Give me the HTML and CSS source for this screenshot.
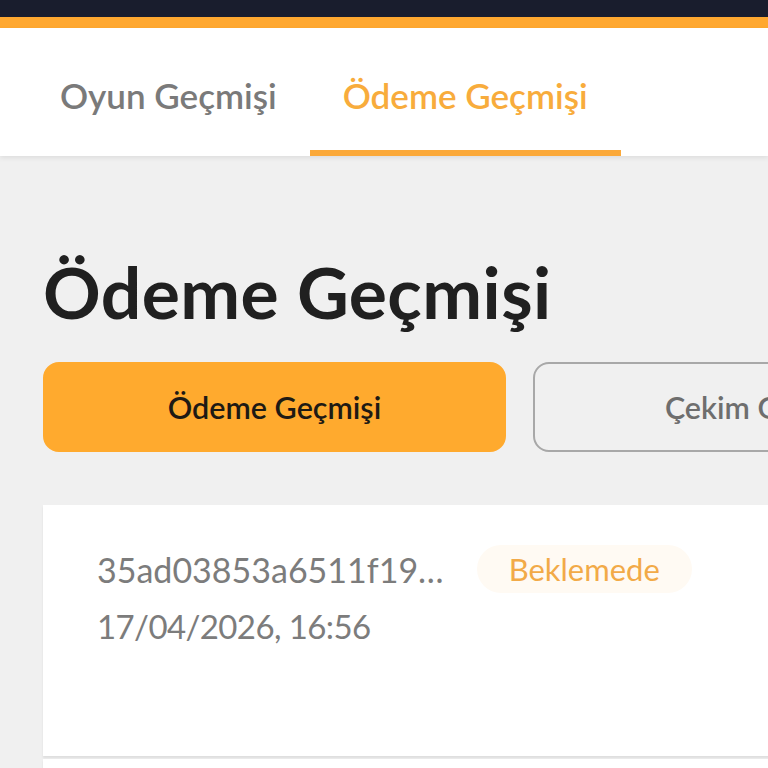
FILE: index.html
```html
<!DOCTYPE html>
<html lang="tr">
<head>
<meta charset="utf-8">
<title>Ödeme Geçmişi</title>
<link rel="stylesheet" href="styles.css">
</head>
<body>
<div class="topbar"></div>
<div class="stripe"></div>
<nav class="tabs">
  <div class="tab">Oyun Geçmişi</div>
  <div class="tab active">Ödeme Geçmişi</div>
</nav>
<main class="main">
  <h1 class="title">Ödeme Geçmişi</h1>
  <div class="switch">
    <button class="btn btn-active">Ödeme Geçmişi</button>
    <button class="btn">Çekim Geçmişi</button>
  </div>
  <div class="list">
    <div class="card">
      <div class="row">
        <span class="hash">35ad03853a6511f19…</span>
        <span class="badge">Beklemede</span>
      </div>
      <div class="date">17/04/2026, 16:56</div>
    </div>
    <div class="card"></div>
  </div>
</main>
</body>
</html>
```
FILE: styles.css
```css
html, body {
  margin: 0;
  padding: 0;
}
body {
  background: #f0f0f0;
  font-family: Lato, "Open Sans", sans-serif;
  overflow: hidden;
  width: 768px;
  height: 768px;
}
.topbar {
  height: 17px;
  background: #191d2d;
}
.stripe {
  height: 11px;
  background: #ffa830;
}
.tabs {
  height: 128px;
  background: #fff;
  display: flex;
  padding-left: 27px;
  box-shadow: 0 2px 5px rgba(0, 0, 0, 0.08);
  position: relative;
}
.tab {
  padding: 0 33px;
  display: flex;
  align-items: center;
  font-size: 35px;
  font-weight: 600;
  color: #7a7a7a;
  border-bottom: 6px solid transparent;
  padding-top: 12px;
}
.tab.active {
  color: #f8ac3c;
  border-bottom-color: #fba93a;
}
.main {
  width: 953px;
  padding: 0 43px;
}
.title {
  margin: 90px 0 0;
  font-size: 71.5px;
  font-weight: 700;
  color: #202020;
  line-height: 90px;
  letter-spacing: 0.4px;
}
.switch {
  display: grid;
  grid-template-columns: 463px 463px;
  gap: 27px;
  margin-top: 26px;
}
.btn {
  height: 90px;
  border-radius: 16px;
  border: 2px solid #a8a8a8;
  background: transparent;
  font-family: inherit;
  font-size: 30.5px;
  font-weight: 600;
  color: #6e6e6e;
  padding: 0;
}
.btn-active {
  background: #ffaa2e;
  border-color: #ffaa2e;
  color: #1e1a14;
}
.list {
  margin-top: 53px;
  display: flex;
  flex-direction: column;
  gap: 3px;
}
.card {
  background: #fff;
  height: 251px;
  box-sizing: border-box;
  padding: 40px 54px;
  box-shadow: 0 2px 2px rgba(0, 0, 0, 0.08);
}
.row {
  display: flex;
  align-items: center;
  gap: 33px;
}
.hash {
  font-size: 34px;
  color: #7c7c7c;
  font-weight: 400;
}
.badge {
  background: #fffaf3;
  color: #f2aa48;
  font-size: 31px;
  height: 48px;
  line-height: 48px;
  padding: 0 32px;
  border-radius: 24px;
}
.date {
  font-size: 33px;
  letter-spacing: -0.6px;
  color: #7c7c7c;
  margin-top: 13px;
}
```
